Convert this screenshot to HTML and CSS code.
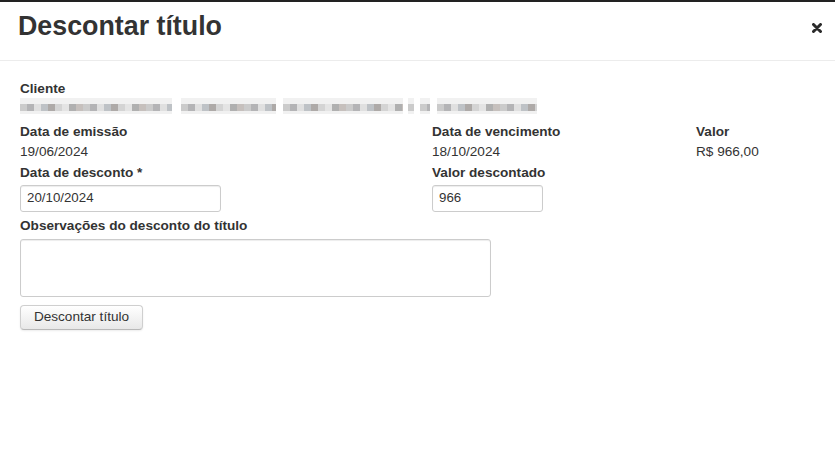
FILE: index.html
```html
<!DOCTYPE html>
<html lang="pt-BR">
<head>
<meta charset="utf-8">
<title>Descontar título</title>
<link rel="stylesheet" href="styles.css">
</head>
<body>
<div class="modal">
  <div class="modal-header">
    <h3 class="title">Descontar título</h3>
    <button class="close" type="button" aria-label="Fechar">
      <svg width="10" height="10" viewBox="0 0 10 10"><path d="M1.5 1.5 L8.5 8.5 M8.5 1.5 L1.5 8.5" stroke="#2b2b2b" stroke-width="3" stroke-linecap="round"/></svg>
    </button>
  </div>
  <div class="modal-body">
    <div class="field">
      <div class="label">Cliente</div>
      <div class="blur">
        <span class="seg s1"></span>
        <span class="seg s2"></span>
        <span class="seg s3"></span>
        <span class="seg s4"></span>
        <span class="seg s5"></span>
        <span class="seg s6"></span>
      </div>
    </div>
    <div class="grid">
      <div class="cell">
        <div class="label">Data de emissão</div>
        <div class="value">19/06/2024</div>
      </div>
      <div class="cell">
        <div class="label">Data de vencimento</div>
        <div class="value">18/10/2024</div>
      </div>
      <div class="cell">
        <div class="label">Valor</div>
        <div class="value">R$ 966,00</div>
      </div>
      <div class="cell">
        <label class="label" for="dt">Data de desconto *</label>
        <input id="dt" class="input input-date" type="text" value="20/10/2024">
      </div>
      <div class="cell">
        <label class="label" for="vl">Valor descontado</label>
        <input id="vl" class="input input-value" type="text" value="966">
      </div>
    </div>
    <div class="obs">
      <label class="label" for="ob">Observações do desconto do título</label>
      <textarea id="ob" class="textarea"></textarea>
    </div>
    <button class="btn" type="button">Descontar título</button>
  </div>
</div>
</body>
</html>
```
FILE: styles.css
```css
html, body {
  margin: 0;
  padding: 0;
  background: #fff;
}
body {
  font-family: "Liberation Sans", Arial, sans-serif;
  font-size: 13.6px;
  line-height: 20px;
  color: #333;
}
.modal {
  border-top: 2px solid #222;
  width: 835px;
  height: 468px;
}
.modal-header {
  display: flex;
  align-items: flex-start;
  padding: 10px 13px 19px 18px;
  border-bottom: 1px solid #ececec;
}
.title {
  margin: 0;
  font-size: 26.8px;
  line-height: 29px;
  font-weight: bold;
  color: #333;
}
.close {
  margin-left: auto;
  margin-top: 11px;
  padding: 0;
  border: 0;
  background: none;
  width: 10px;
  height: 10px;
  display: flex;
}
.modal-body {
  padding: 18px 20px 0 20px;
}
.label {
  display: block;
  font-weight: bold;
  color: #333;
}
.value {
  color: #333;
}
.blur {
  display: flex;
  height: 16px;
  margin: -1px 0 8px 0;
}
.seg {
  display: block;
  height: 16px;
  background-color: #f1f1f1;
  background-image: repeating-linear-gradient(90deg,
    #cbcbcb 0 7px, #b4b4b6 7px 14px, #e0e0e0 14px 21px,
    #bec2c6 21px 28px, #aeaaa8 28px 35px, #d4d4d4 35px 42px,
    #e4e4e4 42px 49px, #b0b0b0 49px 56px, #c6c0bd 56px 63px);
  background-size: 100% 7px;
  background-position: 0 6px;
  background-repeat: no-repeat;
}
.s1 { width: 152px; }
.s2 { width: 95px; margin-left: 9px; }
.s3 { width: 120px; margin-left: 7px; }
.s4 { width: 6px; margin-left: 5px; }
.s5 { width: 10px; margin-left: 6px; }
.s6 { width: 100px; margin-left: 7px; }
.grid {
  display: grid;
  grid-template-columns: 412px 264px 1fr;
  row-gap: 1px;
}
.cell {
  display: flex;
  flex-direction: column;
  align-items: flex-start;
}
.input {
  box-sizing: border-box;
  margin-top: 2px;
  height: 27px;
  padding: 0 6px 2px 6px;
  border: 1px solid #ccc;
  border-radius: 3px;
  box-shadow: inset 0 1px 1px rgba(0,0,0,0.075);
  font-family: "Liberation Sans", Arial, sans-serif;
  font-size: 13.3px;
  color: #333;
  background: #fff;
}
.input-date { width: 201px; }
.input-value { width: 111px; }
.obs {
  margin-top: 4px;
  display: flex;
  flex-direction: column;
  align-items: flex-start;
}
.textarea {
  box-sizing: border-box;
  margin-top: 3px;
  width: 471px;
  height: 58px;
  border: 1px solid #ccc;
  border-radius: 3px;
  box-shadow: inset 0 1px 1px rgba(0,0,0,0.075);
  resize: none;
  font-family: "Liberation Sans", Arial, sans-serif;
  font-size: 13.6px;
}
.btn {
  display: block;
  box-sizing: border-box;
  margin-top: 8px;
  width: 123px;
  height: 25px;
  padding: 0 0 3px 0;
  border: 1px solid #cfcfcf;
  border-bottom-color: #b8b8b8;
  border-radius: 4px;
  background: linear-gradient(#ffffff, #e8e8e8);
  box-shadow: 0 1px 2px rgba(0,0,0,0.08);
  font-family: "Liberation Sans", Arial, sans-serif;
  font-size: 13.6px;
  color: #333;
}
```
